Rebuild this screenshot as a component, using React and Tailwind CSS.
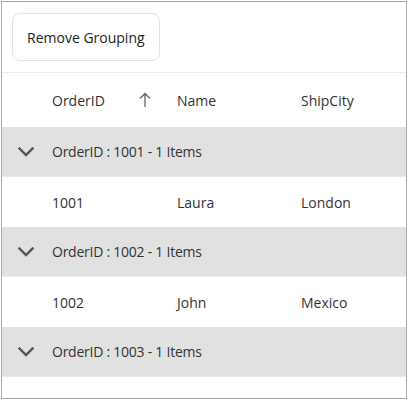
import React from "react";

const rows = [
  { id: 1001, name: "Laura", city: "London" },
  { id: 1002, name: "John", city: "Mexico" },
  { id: 1003, name: null, city: null },
];

const Chevron = () => (
  <svg width="16" height="10" viewBox="0 0 16 10" fill="none">
    <path d="M1.5 1.5 L8 8 L14.5 1.5" stroke="#555" strokeWidth="2.4" strokeLinecap="square" />
  </svg>
);

const UpArrow = () => (
  <svg width="12" height="16" viewBox="0 0 12 16" fill="none">
    <path d="M6 15 V1.5 M1 6.5 L6 1.5 L11 6.5" stroke="#666" strokeWidth="1.3" />
  </svg>
);

const App = () => {
  return (
    <div className="p-px w-[408px] h-[400px] bg-white font-['Open_Sans',sans-serif] text-[14px] text-[#333]">
      <div className="w-[406px] h-[398px] border border-[#a9a9a9] overflow-hidden flex flex-col">
        <div className="h-[71px] shrink-0 flex items-center pl-[10px] border-b border-[#ececec]">
          <button className="h-[48px] px-[14px] rounded-lg border border-[#e3e3e3] bg-white text-[#222]">
            Remove Grouping
          </button>
        </div>

        <div className="h-[54px] flex items-center shrink-0">
          <div className="w-[38px]" />
          <div className="w-[125px] pl-3 pr-[14px] flex items-center justify-between">
            <span>OrderID</span>
            <UpArrow />
          </div>
          <div className="w-[124px] pl-3">Name</div>
          <div className="flex-1 pl-3">ShipCity</div>
        </div>

        {rows.map((r) => (
          <React.Fragment key={r.id}>
            <div className="h-[50px] shrink-0 flex items-center bg-[#e1e1e1] border-b border-[#ebebeb]">
              <div className="w-[38px] flex justify-center pl-[9px]">
                <Chevron />
              </div>
              <div className="pl-3 tracking-[-0.25px]">OrderID : {r.id} - 1 Items</div>
            </div>
            {r.name ? (
              <div className="h-[50px] shrink-0 flex items-center">
                <div className="w-[38px]" />
                <div className="w-[125px] pl-3">{r.id}</div>
                <div className="w-[124px] pl-3">{r.name}</div>
                <div className="flex-1 pl-3">{r.city}</div>
              </div>
            ) : null}
          </React.Fragment>
        ))}
      </div>
    </div>
  );
};

export default App;
